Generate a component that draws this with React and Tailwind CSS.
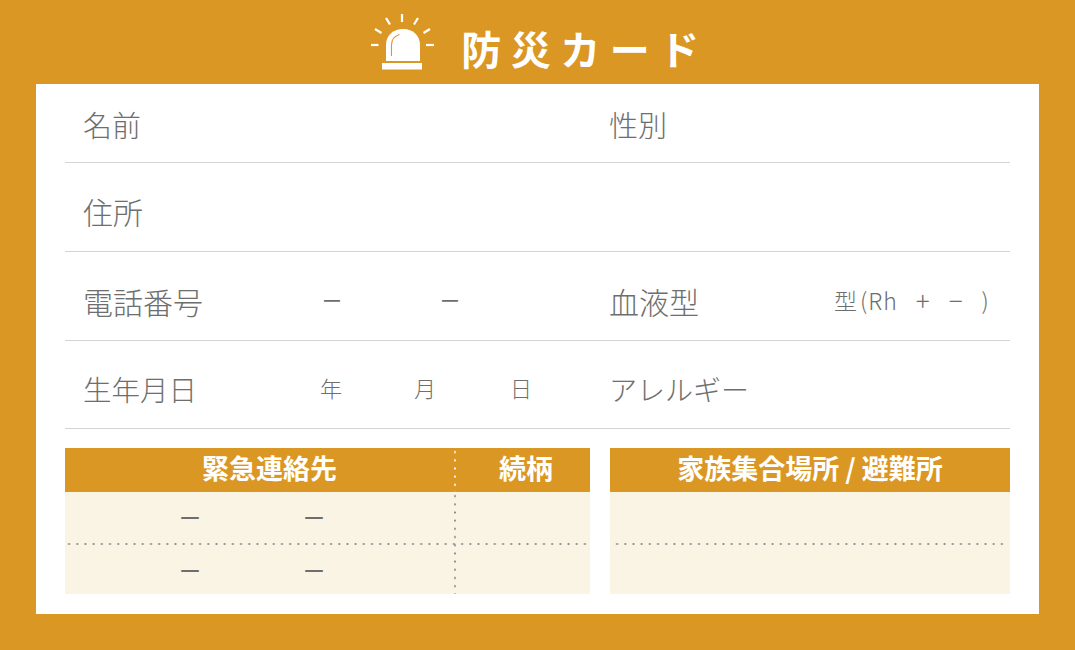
const font = { fontFamily: '"Noto Sans CJK JP", "Noto Sans", sans-serif' };

function Siren() {
  return (
    <svg width="66" height="58" viewBox="0 0 66 58" className="shrink-0">
      <g stroke="#fff" strokeWidth="2.2" fill="none">
        <path d="M32 0v8" />
        <path d="M16 4l4 6.500" />
        <path d="M48 4l-4 6.500" />
        <path d="M5 15l6.500 4" />
        <path d="M60 15l-6.500 4" />
        <path d="M1 31h7.500" />
        <path d="M56 31h8" />
      </g>
      <path d="M16 47V31c0-9.500 7-16 17-16s17 6.500 17 16v16z" fill="#fff" />
      <path d="M21.500 42V31c0-5 3-9 8-10.500" stroke="#DB9723" strokeWidth="1.100" fill="none" />
      <rect x="12" y="49" width="40" height="6.500" fill="#fff" />
    </svg>
  );
}

function Dash({ className = "" }) {
  return <span className={`leading-none ${className}`}>ー</span>;
}

function Row({ className = "", children }) {
  return <div className={`flex items-center border-b border-[#d4d4d4] text-[#6e6e6e] ${className}`}>{children}</div>;
}

export default function App() {
  return (
    <div style={font} className="w-[1075px] h-[650px] bg-[#DB9723] flex flex-col items-center overflow-hidden">
      <header className="h-[84px] w-full flex items-start justify-center pl-[4px] pt-[14px] gap-[25px] text-white">
        <Siren />
        <h1 className="mt-[5px] text-[40px] leading-[58px] font-bold tracking-[9.500px]">防災カード</h1>
      </header>
      <main className="w-[1003px] h-[530px] bg-white px-[29px] flex flex-col">
        <Row className="h-[79px] pt-[2px]">
          <span className="w-[544px] pl-[18px] text-[29px] font-light leading-none">名前</span>
          <span className="text-[29px] font-light leading-none">性別</span>
        </Row>
        <Row className="h-[89px] pt-[8px]">
          <span className="pl-[18px] text-[30px] font-light leading-none">住所</span>
        </Row>
        <Row className="h-[89px] pt-[10px]">
          <div className="w-[544px] flex items-center pl-[18px]">
            <span className="w-[239px] text-[30px] font-light leading-none">電話番号</span>
            <Dash className="w-[118px] text-[20px]" />
            <Dash className="text-[20px]" />
          </div>
          <span className="w-[225px] text-[30px] font-light leading-none">血液型</span>
          <span className="flex items-center mb-[2px] text-[23px] font-light leading-none">
            <span>型</span>
            <span className="ml-[3px] tracking-[1px]">(Rh</span>
            <span className="ml-[18px] text-[26px]">+</span>
            <span className="ml-[19px] text-[26px]">−</span>
            <span className="ml-[19px]">)</span>
          </span>
        </Row>
        <Row className="h-[88px] pt-[9px]">
          <div className="w-[544px] flex items-center pl-[18px]">
            <span className="w-[237px] text-[28.500px] font-light leading-none">生年月日</span>
            <span className="w-[94px] mb-[4px] text-[22px] font-light leading-none">年</span>
            <span className="w-[96px] mb-[4px] text-[22px] font-light leading-none">月</span>
            <span className="mb-[4px] text-[22px] font-light leading-none">日</span>
          </div>
          <span className="text-[28px] font-light leading-none">アレルギー</span>
        </Row>
        <section className="mt-[19px] flex gap-[20px] h-[146px]">
          <div className="w-[525px] relative flex flex-col">
            <div className="h-[44px] bg-[#DB9723] flex text-white text-[27px] font-bold">
              <span className="w-[390px] pl-[19px] text-center leading-[40px]">緊急連絡先</span>
              <span className="flex-1 pl-[7px] text-center leading-[40px]">続柄</span>
            </div>
            <div className="flex-1 bg-[#FAF4E5] flex flex-col text-[#6e6e6e] text-[22px]">
              <div className="h-[51px] pb-[3px] flex items-center pl-[114px]">
                <Dash className="w-[124px]" />
                <Dash />
              </div>
              <div className="h-[2px] bg-[radial-gradient(circle,#8a8a8a_0.900px,transparent_1.150px)] bg-[length:8.200px_2px]" />
              <div className="flex-1 pb-[1px] flex items-center pl-[114px]">
                <Dash className="w-[124px]" />
                <Dash />
              </div>
            </div>
            <div className="absolute left-[389px] top-0 h-[44px] w-[2px] bg-[radial-gradient(circle,#ffffff_0.900px,transparent_1.150px)] bg-[length:2px_8.200px]" />
            <div className="absolute left-[389px] top-[44px] bottom-0 w-[2px] bg-[radial-gradient(circle,#8a8a8a_0.900px,transparent_1.150px)] bg-[length:2px_8.200px]" />
          </div>
          <div className="w-[400px] flex flex-col">
            <div className="h-[44px] bg-[#DB9723] text-white text-[27px] font-bold text-center leading-[40px]">家族集合場所 / 避難所</div>
            <div className="flex-1 bg-[#FAF4E5] flex flex-col">
              <div className="h-[51px]" />
              <div className="h-[2px] mx-[3px] bg-[radial-gradient(circle,#8a8a8a_0.900px,transparent_1.150px)] bg-[length:8.200px_2px]" />
            </div>
          </div>
        </section>
      </main>
    </div>
  );
}
